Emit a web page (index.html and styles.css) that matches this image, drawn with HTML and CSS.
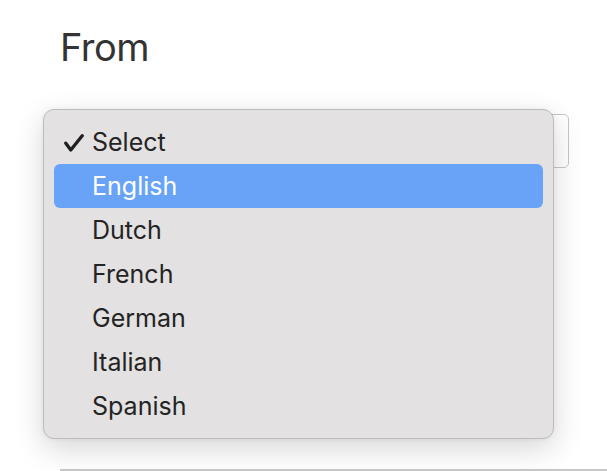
FILE: index.html
```html
<!DOCTYPE html>
<html lang="en">
<head>
<meta charset="utf-8">
<title>From</title>
<link rel="stylesheet" href="styles.css">
</head>
<body>
<div class="page">
  <div class="field">
    <div class="label">From</div>
    <div class="select"></div>
  </div>
  <div class="rule"></div>
  <ul class="menu">
    <li class="item checked"><span class="check"><svg width="20" height="18" viewBox="0 0 20 18"><path d="M1.8 9.2 L6.8 16 L18.2 1.8" fill="none" stroke="#1f1f1f" stroke-width="3.3" stroke-linecap="round" stroke-linejoin="round"/></svg></span>Select</li>
    <li class="item active">English</li>
    <li class="item">Dutch</li>
    <li class="item">French</li>
    <li class="item">German</li>
    <li class="item">Italian</li>
    <li class="item">Spanish</li>
  </ul>
</div>
</body>
</html>
```
FILE: styles.css
```css
html, body {
  margin: 0;
  padding: 0;
  background: #ffffff;
}
.page {
  position: relative;
  width: 607px;
  height: 471px;
  overflow: hidden;
  font-family: Inter, "Noto Sans", "Liberation Sans", sans-serif;
}
.field {
  padding: 24px 38px 0 60px;
  display: flex;
  flex-direction: column;
}
.label {
  font-size: 38px;
  line-height: 46px;
  color: #333333;
  letter-spacing: -0.5px;
}
.select {
  margin-top: 44px;
  height: 52px;
  border: 1px solid #c6c6c6;
  border-radius: 5px;
  background: #ffffff;
}
.rule {
  margin: 301px 0 0 60px;
  height: 2px;
  background: #c8c8c8;
}
.menu {
  position: absolute;
  left: 43px;
  top: 109px;
  width: 489px;
  margin: 0;
  padding: 10px 10px 10px 10px;
  list-style: none;
  background: #e3e1e2;
  border: 1px solid #bdbbbc;
  border-radius: 11px;
  box-shadow: 0 10px 30px rgba(0, 0, 0, 0.16), 0 0 6px rgba(0, 0, 0, 0.05);
}
.item {
  position: relative;
  height: 44px;
  line-height: 44px;
  padding-left: 38px;
  font-size: 25px;
  color: #242424;
  border-radius: 6px;
}
.item.active {
  background: #68a3f8;
  color: #ffffff;
}
.check {
  position: absolute;
  left: 10px;
  top: 14px;
  width: 20px;
  height: 18px;
  line-height: 0;
}
```
